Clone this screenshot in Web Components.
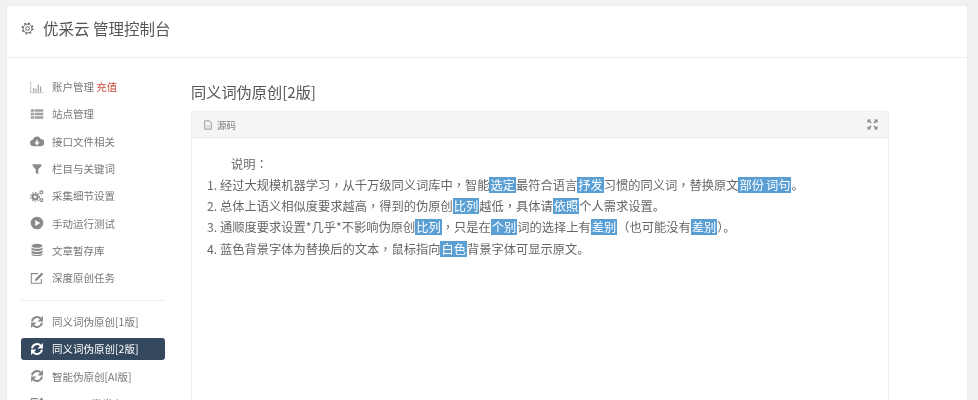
<!DOCTYPE html>
<html lang="zh"><head><meta charset="utf-8">
<style>
html,body{margin:0;height:400px;overflow:hidden;background:#f1f1f1}
body{font-family:"Noto Sans CJK SC","Liberation Sans",sans-serif;filter:blur(.4px)}
</style></head><body>
<app-shell>
  <app-header slot="header">优采云 管理控制台</app-header>
  <side-nav slot="nav">
    <nav-item icon="chart">账户管理 <span style="color:#c9493a">充值</span></nav-item>
    <nav-item icon="list">站点管理</nav-item>
    <nav-item icon="cloud">接口文件相关</nav-item>
    <nav-item icon="filter">栏目与关键词</nav-item>
    <nav-item icon="cogs">采集细节设置</nav-item>
    <nav-item icon="play">手动运行测试</nav-item>
    <nav-item icon="db">文章暂存库</nav-item>
    <nav-item icon="edit">深度原创任务</nav-item>
    <nav-sep></nav-sep>
    <nav-item icon="sync" pill>同义词伪原创[1版]</nav-item>
    <nav-item icon="sync" pill active>同义词伪原创[2版]</nav-item>
    <nav-item icon="sync" pill>智能伪原创[AI版]</nav-item>
    <nav-item icon="edit" pill>WISIN一键发布</nav-item>
  </side-nav>
  <content-area>
    <page-title>同义词伪原创[2版]</page-title>
    <source-panel>
      <p class="i">说明<c-p lang="zh-TW">：</c-p></p>
      <p>1. 经过大规模机器学习<c-p lang="zh-TW">，</c-p>从千万级同义词库中<c-p lang="zh-TW">，</c-p>智能<syn-word>选定</syn-word>最符合语言<syn-word>抒发</syn-word>习惯的同义词<c-p lang="zh-TW">，</c-p>替换原文<syn-word>部份</syn-word><syn-word>词句</syn-word>。</p>
      <p>2. 总体上语义相似度要求越高<c-p lang="zh-TW">，</c-p>得到的伪原创<syn-word>比列</syn-word>越低<c-p lang="zh-TW">，</c-p>具体请<syn-word>依照</syn-word>个人需求设置。</p>
      <p>3. 通顺度要求设置*几乎*不影响伪原创<syn-word>比列</syn-word><c-p lang="zh-TW">，</c-p>只是在<syn-word>个别</syn-word>词的选择上有<syn-word>差别</syn-word><c-p lang="zh-TW">（</c-p>也可能没有<syn-word>差别</syn-word><c-p lang="zh-TW">）</c-p>。</p>
      <p>4. 蓝色背景字体为替换后的文本<c-p lang="zh-TW">，</c-p>鼠标指向<syn-word>白色</syn-word>背景字体可显示原文。</p>
    </source-panel>
  </content-area>
</app-shell>
<script>
const svg=(vb,body,s)=>`<svg viewBox="0 0 ${vb} ${vb}" width="${s}" height="${s}" style="display:block">${body}</svg>`;
const ICONS={
 chart:`<path d="M.8 1.5v13h14.4" fill="none" stroke="currentColor" stroke-width=".8" opacity=".75"/><path d="M3.500 9h1.300v4.500H3.500zM6.200 10h1.300v3.500H6.200zM8.800 5.500h1.300v8H8.800zM11.500 7.500h1.300v6h-1.300z" fill="currentColor" opacity=".85"/>`,
 list:`<path d="M.8 2.500h4.200v3H.8zM5.800 2.500h9.400v3H5.800zM.8 6.500h4.200v3H.8zM5.800 6.500h9.400v3H5.800zM.8 10.500h4.200v3H.8zM5.800 10.500h9.400v3H5.800z" fill="currentColor" opacity=".8"/>`,
 cloud:`<path fill-rule="evenodd" d="M3.800 14a3.700 3.700 0 0 1-.6-7.350A4.800 4.800 0 0 1 12.200 5.600a4.200 4.200 0 0 1 .1 8.400zM7 7v2.800H5L8 12.800l3-3H9V7z" fill="currentColor"/>`,
 filter:`<path d="M3 2.500h10v2L9.500 8.300V14L6.500 12.500V8.300L3 4.500z" fill="currentColor"/>`,
 cogs:`<g fill="none" stroke="currentColor"><circle cx="5.800" cy="9" r="2.800" stroke-width="2.300"/><circle cx="5.800" cy="9" r="4.900" stroke-width="1.400" stroke-dasharray="1.700 1.500"/><circle cx="13" cy="3.800" r="1.700" stroke-width="1.400"/><circle cx="13" cy="12.600" r="1.700" stroke-width="1.400"/></g>`,
 play:`<path fill-rule="evenodd" d="M8 .8a7.200 7.200 0 1 1 0 14.400A7.200 7.200 0 0 1 8 .8zM6 4.600v6.800L11.600 8z" fill="currentColor"/>`,
 db:`<g fill="currentColor"><ellipse cx="8" cy="3.200" rx="6.300" ry="2.300"/><path d="M1.700 5.200c1 2 11.600 2 12.600 0v2.300c-1 2-11.600 2-12.600 0zM1.700 8.700c1 2 11.600 2 12.600 0V11c-1 2-11.600 2-12.600 0zM1.700 12.100c1 2 11.600 2 12.600 0v1c-1 2.500-11.600 2.500-12.600 0z"/></g>`,
 edit:`<path d="M13 9v5H1.500V3H9" fill="none" stroke="currentColor" stroke-width="1.200"/><path d="M6 9l7.200-7.200 1.900 1.900L7.900 10.900l-2.500.6z" fill="currentColor"/>`,
 sync:`<g fill="none" stroke="currentColor" stroke-width="2.200"><path d="M2.300 7.200A5.800 5.800 0 0 1 12.300 4.200"/><path d="M13.700 8.800a5.800 5.800 0 0 1-10 3"/></g><path d="M14.800 1.200V7.400H8.600zM1.200 14.800V8.600h6.200z" fill="currentColor"/>`
};
const def=(name,css,html)=>{customElements.define(name,class extends HTMLElement{
  constructor(){super();this.attachShadow({mode:"open"}).innerHTML=`<style>${css}</style>${typeof html==="function"?html(this):html}`}
})};
def("app-shell",`:host{display:block;margin:5px 10px 0 6px;background:#fff;border:1px solid #ececec;border-bottom:0;height:395px;box-sizing:border-box;overflow:hidden}
.b{display:flex;height:342px}`,`<slot name="header"></slot><div class="b"><slot name="nav"></slot><slot></slot></div>`);
def("app-header",`:host{display:flex;align-items:center;gap:9px;height:52px;padding:0 0 7px 14px;box-sizing:border-box;border-bottom:1px solid #eee;color:#555;font-size:15.5px;line-height:20px}`,
 `<svg viewBox="0 0 16 16" width="13" height="13" style="flex:none"><circle cx="8" cy="8" r="2.300" fill="none" stroke="#555" stroke-width="1.100"/><circle cx="8" cy="8" r="5.400" fill="none" stroke="#555" stroke-width="1.100"/><circle cx="8" cy="8" r="6.600" fill="none" stroke="#555" stroke-width="1.500" stroke-dasharray="2.200 3"/></svg><slot></slot>`);
def("side-nav",`:host{display:flex;flex-direction:column;flex:none;width:159px;box-sizing:border-box;padding:15px 0 0 14px}`,`<slot></slot>`);
def("nav-item",`:host{display:flex;align-items:center;flex:none;height:27.3px;width:144px;box-sizing:border-box;color:#777;font-size:10.5px;padding-left:8.500px;gap:8.500px;white-space:nowrap}
:host([active]){background:#34495e;color:#fff;border-radius:3px;height:22px;margin:2.650px 0}
.ic{flex:none;width:14px;height:14px;color:#8a8a8a}
:host([active]) .ic{color:#fff}`,
 el=>`<span class="ic">${svg(16,ICONS[el.getAttribute("icon")],14)}</span><span><slot></slot></span>`);
def("nav-sep",`:host{display:block;flex:none;height:1px;width:144px;background:#eee;margin:9px 0 6.500px 0}`,``);
def("content-area",`:host{display:block;flex:1;min-width:0;padding:21px 78px 0 25px;box-sizing:border-box}`,`<slot></slot>`);
def("page-title",`:host{display:block;color:#555;font-size:15.2px;line-height:26px;height:26px;margin-top:-1px;margin-bottom:7px;white-space:nowrap}`,`<slot></slot>`);
def("source-panel",`:host{display:block;border:1px solid #efefef;border-radius:3px 3px 0 0;height:400px;box-sizing:border-box;color:#666}
.h{display:flex;align-items:center;height:25px;padding:0 10px 0 11px;background:#f5f5f5;border-bottom:1px solid #e8e8e8;font-size:9.5px;color:#777;gap:4px}
.h span{flex:1}
.c{padding:15.500px 16px 0 15px;font-size:12.25px;line-height:21.3px}
::slotted(p){margin:0;white-space:nowrap}
::slotted(p.i){padding-left:24px}`,
 `<div class="h"><svg viewBox="0 0 12 12" width="10" height="10" fill="none" stroke="#888"><path d="M2 1h5.500L10 3.500V11H2z"/><path d="M5 6.500L4 7.700 5 9M7 6.500L8 7.700 7 9" stroke-width=".8"/></svg><span>源码</span><svg viewBox="0 0 12 12" width="11" height="11" fill="#888"><path d="M.5.5h4L3.100 1.900 5 3.800 3.800 5 1.900 3.100.5 4.500zM11.500.5v4L10.100 3.100 8.200 5 7 3.800 8.900 1.900 7.500.5zM.5 11.500v-4l1.400 1.400L3.800 7 5 8.200 3.100 10.100l1.400 1.400zM11.500 11.500h-4l1.400-1.400L7 8.200 8.200 7l1.900 1.900 1.400-1.400z"/></svg></div><div class="c"><slot></slot></div>`);
def("syn-word",`:host{display:inline-block;background:#5a9fd4;color:#fff;padding:0 1px;line-height:16px}`,`<slot></slot>`);
def("c-p",`:host{display:inline;font-family:"Noto Sans CJK TC",sans-serif}`,`<slot></slot>`);
</script>
</body></html>
